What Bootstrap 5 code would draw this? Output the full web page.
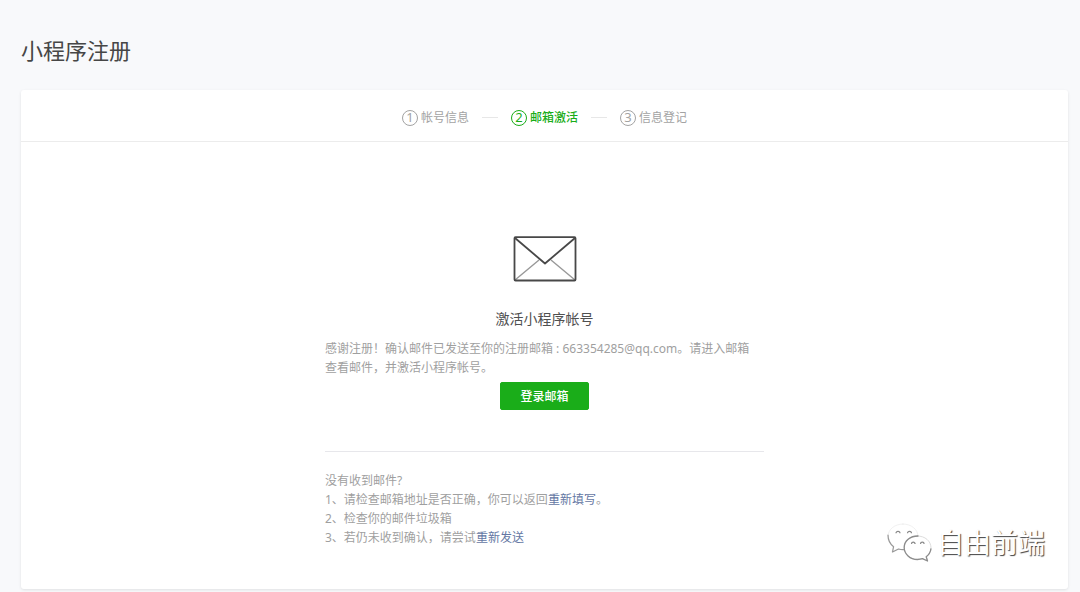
<!DOCTYPE html>
<html lang="zh-CN">
<head>
<meta charset="utf-8">
<meta name="viewport" content="width=device-width, initial-scale=1">
<title>小程序注册</title>
<link href="https://cdn.jsdelivr.net/npm/bootstrap@5.3.0/dist/css/bootstrap.min.css" rel="stylesheet">
<style>
  body { background: #f8f9fb; color: #353535; font: 12px/19px "Noto Sans", "Noto Sans CJK SC", sans-serif; }
  .page { padding: 34px 12px 3px 21px; }
  .page-title { font-size: 22px; line-height: 32px; font-weight: 400; margin-bottom: 24px; color: #464646; }
  .panel { min-height: calc(100vh - 93px); border-radius: 3px; box-shadow: 0 1px 3px rgba(0, 0, 0, .1); }
  .step-bar { height: 52px; padding-top: 4px; border-bottom: 1px solid #ececec; color: #a3a3a3; }
  .step-list { gap: 13px; }
  .step { gap: 3px; }
  .step-num { width: 16px; height: 16px; border: 1px solid currentColor; font-size: 13px; line-height: 13px; }
  .step-line { width: 16px; height: 1px; background: #e7e7e7; }
  .step.current { color: #1aad19; font-weight: 500; }
  .content { max-width: 439px; padding: 94px 0 41px; color: #9f9f9f; }
  .content-title { font-size: 14px; line-height: 20px; font-weight: 400; color: #505050; margin: 27px 0 10px; }
  .btn-mail { --bs-btn-color: #fff; --bs-btn-bg: #1aad19; --bs-btn-border-color: #1aad19; --bs-btn-hover-color: #fff; --bs-btn-hover-bg: #179b16; --bs-btn-hover-border-color: #179b16; --bs-btn-padding-x: 19px; --bs-btn-font-size: 12px; --bs-btn-line-height: 18px; --bs-btn-border-radius: 2px; --bs-btn-font-weight: 500; padding-top: 5px; padding-bottom: 3px; margin: 5px 0 41px; }
  .help { border-top: 1px solid #e7e7eb; padding-top: 19px; }
  .help a { color: #6477a3; }
  .watermark { right: 23px; bottom: 26px; gap: 5px; color: #fff; font-size: 27px; line-height: 38px; text-shadow: 1px 1px 1px #444; }
</style>
<script defer src="https://cdn.jsdelivr.net/npm/bootstrap@5.3.0/dist/js/bootstrap.bundle.min.js"></script>
</head>
<body>
<main class="page">
  <h1 class="page-title">小程序注册</h1>
  <section class="panel bg-white position-relative">
    <nav class="step-bar d-flex align-items-center justify-content-center" aria-label="注册步骤">
      <ol class="step-list list-unstyled d-flex align-items-center mb-0">
        <li class="step d-flex align-items-center"><span class="step-num rounded-circle text-center">1</span>帐号信息</li>
        <li class="step-line" aria-hidden="true"></li>
        <li class="step current d-flex align-items-center" aria-current="step"><span class="step-num rounded-circle text-center fw-normal">2</span>邮箱激活</li>
        <li class="step-line" aria-hidden="true"></li>
        <li class="step d-flex align-items-center"><span class="step-num rounded-circle text-center">3</span>信息登记</li>
      </ol>
    </nav>
    <div class="content mx-auto">
      <div class="text-center">
        <svg class="d-block mx-auto" width="64" height="46" viewBox="0 0 64 46" fill="none" stroke-linejoin="round" aria-hidden="true">
          <path d="M2 44 26 24M62 44 38 24" stroke="#999" stroke-width="1.4"/>
          <rect x="1.5" y="1.2" width="61" height="43.3" rx="1" stroke="#484848" stroke-width="1.8"/>
          <path d="M2 2 32 27.500 62 2" stroke="#484848" stroke-width="1.8"/>
        </svg>
        <h2 class="content-title">激活小程序帐号</h2>
      </div>
      <p class="mb-0 pe-2">感谢注册！确认邮件已发送至你的注册邮箱 : 663354285@qq.com。请进入邮箱查看邮件，并激活小程序帐号。</p>
      <div class="text-center d-flex justify-content-center">
        <button type="button" class="btn btn-mail">登录邮箱</button>
      </div>
      <div class="help">
        <p class="mb-0">没有收到邮件?</p>
        <p class="mb-0">1、请检查邮箱地址是否正确，你可以返回<a class="text-decoration-none" href="#edit">重新填写</a>。</p>
        <p class="mb-0">2、检查你的邮件垃圾箱</p>
        <p class="mb-0">3、若仍未收到确认，请尝试<a class="text-decoration-none" href="#resend">重新发送</a></p>
      </div>
    </div>
    <div class="watermark position-absolute d-flex align-items-center">
      <svg width="46" height="40" viewBox="0 0 46 40" aria-hidden="true">
        <g fill="#fff" stroke-linecap="round" stroke-linejoin="round">
          <path d="M17 1C8.500 1 2 6.600 2 13.700c0 4.200 2.200 7.600 5.600 10L6 29l6-3c2 .6 4.200.8 6.500.6C21 26 32 19 32 13.500 32 6.500 25.400 1 17 1Z" stroke="#ececec" stroke-width=".8"/>
          <path d="M2 12c0 5 2 9 5.600 11.700L6.500 29l6-3c2 .6 4 .8 6 .6" fill="none" stroke="#999" stroke-width="1.200"/>
          <path d="M31.500 13C24 13 18.200 18 18.200 24.500S24 36.500 31.500 36.500c1.800 0 3.400-.3 5-.8l5 2.300-1.300-4.200c2.800-2.200 4.800-5.300 4.800-8.900C45 18 39 13 31.500 13Z" stroke="#d4d4d4" stroke-width=".8"/>
          <path d="M32 13C24 13 18.200 18 18.200 24.500S24 36.500 31.500 36.500c1.800 0 3.400-.3 5-.8l5 2.300-1.300-4.200c2.600-2 4.300-4.600 4.700-7.800" fill="none" stroke="#8c8c8c" stroke-width="1.300"/>
        </g>
        <path d="M10 10.300a2 2 0 0 1 4 0M21.500 10.300a2 2 0 0 1 4 0M25.500 21a1.800 1.800 0 0 1 3.600 0M34.500 21a1.800 1.800 0 0 1 3.600 0" fill="none" stroke="#888" stroke-width="1.200"/>
      </svg>
      <span>自由前端</span>
    </div>
  </section>
</main>
</body>
</html>
